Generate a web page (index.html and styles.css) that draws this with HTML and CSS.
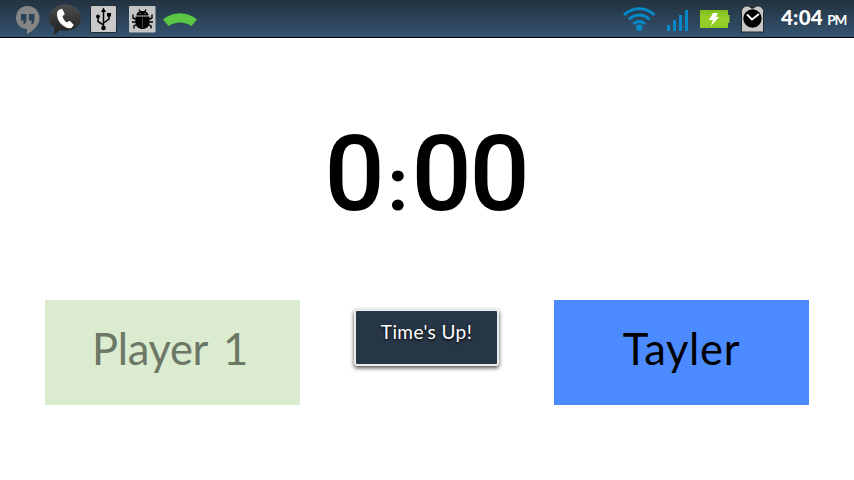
FILE: index.html
```html
<!DOCTYPE html>
<html lang="en">
<head>
<meta charset="utf-8">
<title>Game Timer</title>
<link rel="stylesheet" href="styles.css">
</head>
<body>
<header class="status">
  <div class="notifications">
    <svg class="hangouts" width="26" height="30" viewBox="0 0 26 30"><path fill="#858585" d="M12.500 1C5.500 1 1 6.500 1 13c0 6 4.500 10.500 11 11v5C20 25 24.500 19 24.500 13c0-6.500-5-12-12-12z"/><path fill="#29435b" d="M6 9h5.500v5.500c0 2.500-1 4-3 5v-4H6zm8 0h5.500v5.500c0 2.500-1 4-3 5v-4H14z"/></svg>
    <svg class="phone" width="34" height="32" viewBox="0 0 34 32"><defs><linearGradient id="bubble" x2="0" y2="1"><stop stop-color="#4c4c4c"/><stop offset="1" stop-color="#202020"/></linearGradient></defs><path fill="url(#bubble)" d="M17 .5C8 .5 1 6 1 13.500c0 5 2 8 5.500 10.500L6 31l6-5c11 3 21-3 21-12C33 6 26 .5 17 .5z"/><path fill="#fff" d="M10 6.500l3-1.500q1-.5 1.500.5l2 4q.5 1-.5 1.500l-1.500 1c.5 3 2 5 4.500 6.500l1.500-1.200q.8-.7 1.700 0l3 3q.8.8 0 1.600l-2 2c-2 1.300-7-.3-10.500-4.400S8 9.500 10 6.500z"/></svg>
    <svg class="usb" width="28" height="28" viewBox="0 0 28 28"><rect x=".5" y=".5" width="26" height="27" rx="1.500" fill="#c9c9c9" stroke="#222c35"/><g fill="none" stroke="#000" stroke-width="1.500"><path d="M13.500 5v18M13.500 20L8 16.500V12M13.500 18l5.500-4v-4"/></g><path d="M11 7l2.500-4.500L16 7zM17 8h4v3.500h-4z"/><circle cx="8" cy="11.500" r="1.900"/><circle cx="13.500" cy="23" r="2.300"/></svg>
    <svg class="bug" width="27" height="27" viewBox="0 0 27 27"><rect width="26.500" height="26.500" rx="1" fill="#c4c4c4"/><path d="M7.500 9.500C7.500 6.500 10 5 13.500 5s6 1.500 6 4.500zM6.500 10.500h14V16c0 5-3.500 7-7 7s-7-2-7-7z"/><path d="M10 3.500l1.500 2.500M17 3.500L15.500 6M4 8.500V12l3 1.500M23 8.500V12l-3 1.500M3 16h5M19 16h5M7.500 18.500L5 20v2.500M19.500 18.500L22 20v2.500" fill="none" stroke="#000" stroke-width="1.400"/><path d="M13.500 12v10" stroke="#666" stroke-width=".7"/><path d="M10.500 7h1v1h-1zm5 0h1v1h-1z" fill="#aaa"/></svg>
    <svg class="call" width="36" height="16" viewBox="0 0 36 16"><path fill="#5bc544" d="M1 7.500C11-.8 25-.8 35 7.500l-5.500 6.500c-7-4.800-16-4.800-23 0z"/></svg>
  </div>
  <div class="system">
    <svg class="wifi" width="33" height="26" viewBox="0 0 33 26"><g fill="none" stroke="#0789c9" stroke-width="3"><path d="M1 9c8.500-8.500 22-8.500 30.500 0M6 13.500c6-6 14.500-6 20.500 0M10.500 18c3.500-3.500 8-3.500 11.500 0"/></g><circle cx="16.300" cy="21.800" r="3.200" fill="#0789c9"/></svg>
    <svg class="signal" width="22" height="22" viewBox="0 0 22 22"><path fill="#0789c9" d="M0 15h3v6H0zM6 10h3v11H6zM12 5h3v16h-3zM18 0h3v21h-3z"/></svg>
    <svg class="battery" width="31" height="19" viewBox="0 0 31 19"><defs><linearGradient id="charge" x2="0" y2="1"><stop stop-color="#7fbd19"/><stop offset=".5" stop-color="#9ad22d"/><stop offset="1" stop-color="#8cca21"/></linearGradient></defs><path fill="url(#charge)" d="M1 0h26q1 0 1 1v4h1.500v8H28v4q0 1-1 1H1q-1 0-1-1V1q0-1 1-1z"/><path fill="#fff" d="M13 3h5l-2 4h3l-8 9 2-6h-4z"/></svg>
    <svg class="alarm" width="24" height="28" viewBox="0 0 24 28"><path fill="#c7c7c7" stroke="#23282c" d="M.5 27V8C-.2 4 3 .5 7 1q2 .4 3 2h3q1-1.600 3-2c4-.5 7.500 3 6.500 7v19z"/><circle cx="11.500" cy="13.500" r="9.200"/><path d="M6 9.500l5 5L18 9" fill="none" stroke="#fff" stroke-width="1.800"/></svg>
    <div class="clock"><span class="hour">4:04</span><span class="period">PM</span></div>
  </div>
</header>
<main>
  <h1 class="timer"><span>0</span><span class="colon">:</span><span>0</span><span>0</span></h1>
  <div class="players">
    <button class="player one"><span>Player 1</span></button>
    <button class="player two"><span>Tayler</span></button>
  </div>
</main>
<div class="toast" role="status"><span>Time's Up!</span></div>
</body>
</html>
```

FILE: styles.css
```css
* { box-sizing: border-box; }
body { margin: 0; width: 854px; height: 480px; overflow: hidden; background: #fff; font-family: Lato, sans-serif; }
svg { display: block; flex: none; }
.status { height: 38px; display: flex; justify-content: space-between; background: linear-gradient(#233240, #34536f); border-bottom: 1px solid #000; }
.notifications, .system { display: flex; align-items: flex-start; }
.notifications { padding-left: 15px; }
.hangouts { margin-top: 5px; }
.phone { margin: 4px 0 0 7px; }
.usb { margin: 5px 0 0 8px; }
.bug { margin: 6px 0 0 11px; }
.call { margin: 12px 0 0 6px; }
.system { padding-right: 8px; }
.wifi { margin-top: 6px; }
.signal { margin: 10px 0 0 11px; }
.battery { margin: 10px 0 0 11px; }
.alarm { margin: 5px 0 0 10px; }
.clock { width: 65px; margin: 4px 0 0 16px; display: flex; align-items: baseline; justify-content: space-between; color: #fff; line-height: 26px; white-space: nowrap; }
.hour { font: 900 20.5px/26px Lato, sans-serif; letter-spacing: .2px; }
.period { font-size: 13.500px; font-weight: 700; letter-spacing: -1.2px; }
main { height: 442px; padding: 73px 45px 75px; display: flex; flex-direction: column; justify-content: space-between; }
.timer { margin: 0; height: 126px; display: flex; justify-content: center; align-items: baseline; font: 500 106px/126px Roboto, sans-serif; color: #000; }
.timer span { width: 58px; display: flex; justify-content: center; }
.timer .colon { width: 29px; font-size: 74px; font-weight: 700; }
.players { display: flex; justify-content: space-between; }
.player { width: 255px; height: 105px; padding: 0 0 10px; border: 0; border-radius: 0; font: 400 43.500px/52px Lato, sans-serif; }
.one { padding-right: 5px; background: #dbebcf; color: #6c7766; letter-spacing: -.3px; word-spacing: 5px; }
.two { background: #4c8bff; color: #000; letter-spacing: .7px; }
.toast { position: absolute; left: 354px; top: 309px; width: 145px; height: 57px; border: 2px solid #e9eceb; border-radius: 3px; background: #273646; box-shadow: 0 2px 4px rgba(0, 0, 0, .7); color: #fff; font-size: 19px; line-height: 24px; letter-spacing: .4px; padding-top: 9px; text-align: center; text-shadow: 0 1px 3px #000; }
```
